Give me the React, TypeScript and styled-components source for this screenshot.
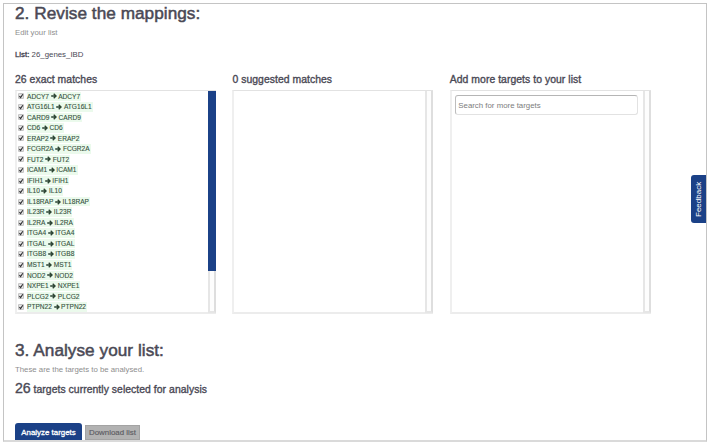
import React from 'react';
import styled, { createGlobalStyle } from 'styled-components';

const GlobalStyle = createGlobalStyle`
  * { box-sizing: border-box; }
  body {
    margin: 0;
    background: #fff;
    font-family: "Liberation Sans", Arial, sans-serif;
    color: #4a4955;
  }
`;

const Frame = styled.main`
  position: relative;
  width: 704px;
  height: 439px;
  margin: 3px 0 0 3px;
  padding-left: 11px;
  border: 1px solid #c4c4c4;
  border-bottom: 2px solid #dadada;
  overflow: hidden;
`;

const Title = styled.h2<{ $top: number }>`
  margin: ${(p) => p.$top}px 0 0;
  height: 20px;
  font-size: 17.2px;
  letter-spacing: 0.04px;
  line-height: 20px;
  font-weight: 400;
  white-space: nowrap;
  -webkit-text-stroke: 0.5px currentColor;
`;

const Hint = styled.p`
  margin: 5px 0 0;
  height: 10px;
  font-size: 7.8px;
  line-height: 10px;
  color: #8e8e8e;
`;

const ListName = styled.p`
  margin: 12px 0 0;
  height: 10px;
  font-size: 7.85px;
  line-height: 10px;
`;

const Medium = styled.span`
  -webkit-text-stroke: 0.35px currentColor;
`;

const Columns = styled.section`
  display: grid;
  grid-template-columns: 201px 201px 201px;
  column-gap: 16.4px;
  margin-top: 13px;
`;

const ColumnTitle = styled.h3`
  margin: 0 0 3px;
  height: 14px;
  font-size: 10.4px;
  letter-spacing: 0.05px;
  line-height: 14px;
  font-weight: 400;
  white-space: nowrap;
  -webkit-text-stroke: 0.35px currentColor;
`;

const Panel = styled.div`
  display: flex;
  justify-content: space-between;
  height: 224px;
  border: 1px solid #e2e2e2;
  border-left: 2px solid #efefef;
  border-bottom: 2px solid #ececec;
  border-right: 0;
`;

const PanelBody = styled.div`
  flex: 1;
  overflow: hidden;
`;

const Track = styled.div`
  width: 8px;
  height: 222px;
  border: 2px solid #e6e6e6;
  border-top-width: 0;
  border-right-color: #dedede;
  background: #fdfdfd;
`;

const Thumb = styled.div`
  width: 8px;
  height: 180px;
  margin-left: -2px;
  background: #1b4187;
`;

const Rows = styled.ul`
  margin: 0;
  padding: 0 0 0 1px;
  list-style: none;
`;

const Row = styled.li`
  display: flex;
  align-items: center;
  height: 10.54px;
`;

const Gene = styled.span`
  display: flex;
  align-items: center;
  gap: 1.6px;
  height: 9.5px;
  margin-left: 3px;
  padding-right: 1px;
  font-size: 6.6px;
  line-height: 9.5px;
  color: #34503c;
  background: #ebfaec;
  white-space: nowrap;
  -webkit-text-stroke: 0.1px currentColor;
`;

const SearchBox = styled.input`
  display: block;
  width: 183px;
  height: 20px;
  margin: 4px 0 0 3px;
  padding: 1px 3px 0 2.5px;
  border: 1px solid #e2e2e2;
  border-top: 1.5px solid #b5b5b5;
  border-left-color: #bdbdbd;
  border-radius: 3px;
  outline: none;
  font: 7.85px "Liberation Sans", Arial, sans-serif;
  background: #fff;
  &::placeholder { color: #7c7c7c; opacity: 1; }
`;

const Summary = styled.p`
  margin: 4px 0 0;
  height: 18px;
  font-size: 10.4px;
  letter-spacing: 0.05px;
  line-height: 18px;
  white-space: nowrap;
  -webkit-text-stroke: 0.35px currentColor;
`;

const Count = styled.span`
  font-size: 14.2px;
  letter-spacing: -0.1px;
`;

const Actions = styled.div`
  display: flex;
  gap: 3px;
  margin-top: 26px;
`;

const Button = styled.button<{ $primary?: boolean }>`
  width: ${(p) => (p.$primary ? 67 : 55)}px;
  height: ${(p) => (p.$primary ? 18 : 15)}px;
  margin-top: ${(p) => (p.$primary ? 0 : 2)}px;
  padding: ${(p) => (p.$primary ? '1px 0 0' : '0')};
  border: ${(p) => (p.$primary ? '0' : '1px solid #a3a3a3')};
  border-radius: ${(p) => (p.$primary ? '3px 3px 0 0' : '0')};
  background: ${(p) => (p.$primary ? '#1b4187' : '#b2b2b2')};
  color: ${(p) => (p.$primary ? '#fff' : '#5c5c62')};
  font: 7.9px "Liberation Sans", Arial, sans-serif;
  white-space: nowrap;
  -webkit-text-stroke: ${(p) => (p.$primary ? 0.3 : 0.15)}px currentColor;
`;

const Feedback = styled.button`
  position: absolute;
  top: 171px;
  right: 0;
  width: 15px;
  height: 48px;
  padding: 0;
  border: 0;
  border-radius: 0 3px 3px 0;
  background: #1b4187;
  color: #fff;
  font: 8px/15px "Liberation Sans", Arial, sans-serif;
  writing-mode: vertical-rl;
  transform: rotate(180deg);
`;

const genes = [
  'ADCY7', 'ATG16L1', 'CARD9', 'CD6', 'ERAP2', 'FCGR2A', 'FUT2', 'ICAM1', 'IFIH1', 'IL10', 'IL18RAP',
  'IL23R', 'IL2RA', 'ITGA4', 'ITGAL', 'ITGB8', 'MST1', 'NOD2', 'NXPE1', 'PLCG2', 'PTPN22',
];

const Check = () => (
  <svg width="6" height="6" viewBox="0 0 6 6">
    <rect x="0.4" y="0.4" width="5.2" height="5.2" rx="0.8" fill="#e4e4e4" stroke="#a6a6a6" strokeWidth="0.7" />
    <path d="M1.4 3.1 2.6 4.5 4.8 1.2" fill="none" stroke="#303033" strokeWidth="1.15" />
  </svg>
);

const Arrow = () => (
  <svg width="6" height="6" viewBox="0 0 6 6">
    <path d="M0.2 3H5M2.7 0.7 5.1 3 2.7 5.3" fill="none" stroke="#2c4433" strokeWidth="1.35" />
  </svg>
);

export default function App() {
  return (
    <>
      <GlobalStyle />
      <Frame>
        <Title $top={-1}>2. Revise the mappings:</Title>
        <Hint>Edit your list</Hint>
        <ListName>
          <Medium>List:</Medium> 26_genes_IBD
        </ListName>
        <Columns>
          <div>
            <ColumnTitle>26 exact matches</ColumnTitle>
            <Panel>
              <PanelBody>
                <Rows>
                  {genes.map((gene) => (
                    <Row key={gene}>
                      <Check />
                      <Gene>
                        {gene}
                        <Arrow />
                        {gene}
                      </Gene>
                    </Row>
                  ))}
                </Rows>
              </PanelBody>
              <Track>
                <Thumb />
              </Track>
            </Panel>
          </div>
          <div>
            <ColumnTitle>0 suggested matches</ColumnTitle>
            <Panel>
              <PanelBody />
              <Track />
            </Panel>
          </div>
          <div>
            <ColumnTitle>Add more targets to your list</ColumnTitle>
            <Panel>
              <PanelBody>
                <SearchBox placeholder="Search for more targets" />
              </PanelBody>
              <Track />
            </Panel>
          </div>
        </Columns>
        <Title $top={26}>3. Analyse your list:</Title>
        <Hint>These are the targets to be analysed.</Hint>
        <Summary>
          <Count>26</Count> targets currently selected for analysis
        </Summary>
        <Actions>
          <Button $primary>Analyze targets</Button>
          <Button>Download list</Button>
        </Actions>
        <Feedback>Feedback</Feedback>
      </Frame>
    </>
  );
}
